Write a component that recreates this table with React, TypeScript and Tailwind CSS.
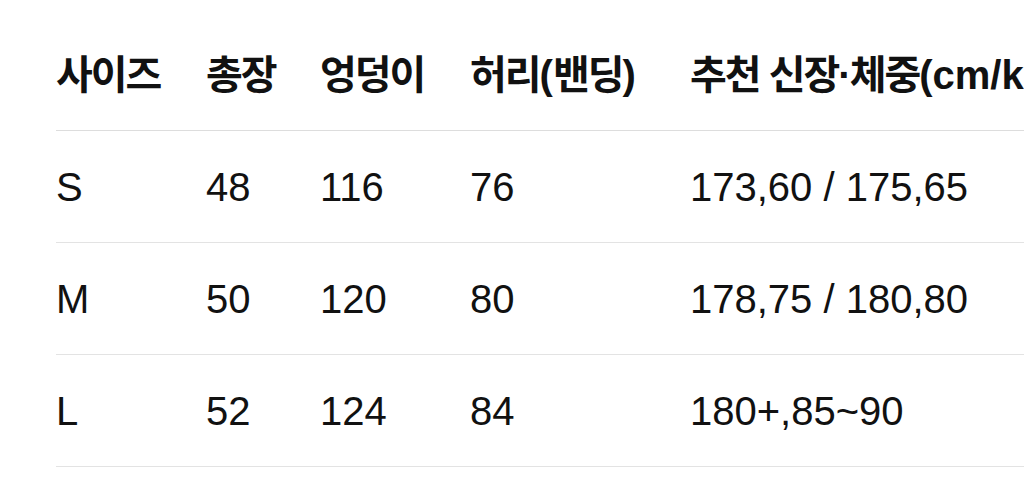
import React from "react";

const font = { fontFamily: '"Liberation Sans", "Noto Sans CJK KR", sans-serif' };

const rows = [
  ["S", "48", "116", "76", "173,60 / 175,65"],
  ["M", "50", "120", "80", "178,75 / 180,80"],
  ["L", "52", "124", "84", "180+,85~90"],
];

const widths = ["w-[150px]", "w-[114px]", "w-[150px]", "w-[220px]", "w-[600px]"];

export default function App() {
  return (
    <div className="w-[1024px] h-[494px] bg-white overflow-hidden text-[#111111]" style={font}>
      <div className="pt-[19px] pl-[56px]">
        <div className="w-[1100px]">
          <div className="flex items-center h-[112px] border-b border-[#dddddd] font-bold text-[40px] tracking-[-2px]">
            <div className={`${widths[0]} shrink-0 whitespace-nowrap`}>사이즈</div>
            <div className={`${widths[1]} shrink-0 whitespace-nowrap`}>총장</div>
            <div className={`${widths[2]} shrink-0 whitespace-nowrap`}>엉덩이</div>
            <div className={`${widths[3]} shrink-0 whitespace-nowrap`}>
              허리<span className="tracking-normal">(</span>밴딩<span className="tracking-normal">)</span>
            </div>
            <div className={`${widths[4]} shrink-0 whitespace-nowrap`}>
              추천 신장·체중<span className="tracking-normal">(cm/kg)</span>
            </div>
          </div>
          {rows.map((r) => (
            <div key={r[0]} className="flex items-center h-[112px] border-b border-[#e3e3e3] text-[40px]">
              {r.map((c, i) => (
                <div key={i} className={`${widths[i]} shrink-0 whitespace-nowrap`}>
                  {c}
                </div>
              ))}
            </div>
          ))}
        </div>
      </div>
    </div>
  );
}
